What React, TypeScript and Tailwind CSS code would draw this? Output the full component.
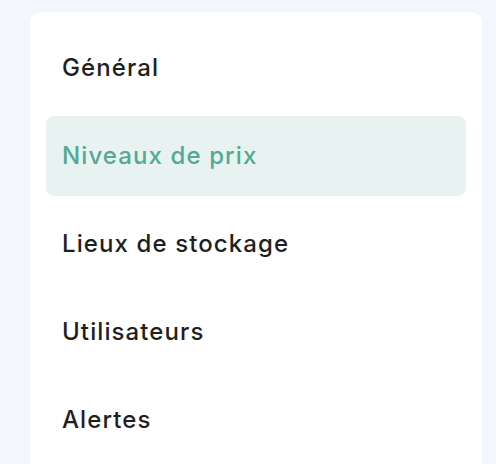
import React from "react";

const items = ["Général", "Niveaux de prix", "Lieux de stockage", "Utilisateurs", "Alertes"];

export default function App() {
  return (
    <div className="w-[496px] h-[464px] overflow-hidden bg-[#f3f6fd] pt-3 pl-[30px] pr-[14px]" style={{ fontFamily: "Inter, 'Open Sans', sans-serif" }}>
      <div className="bg-white rounded-[10px] p-4 h-[480px] flex flex-col gap-2">
        {items.map((it, i) => (
          <div
            key={it}
            className={
              "h-20 flex items-center px-4 rounded-lg text-[24px] font-[450] tracking-[1.1px] " +
              (i === 1 ? "bg-[#e8f3f1] text-[#52aa94]" : "text-[#1f1f1f]")
            }
          >
            {it}
          </div>
        ))}
      </div>
    </div>
  );
}
